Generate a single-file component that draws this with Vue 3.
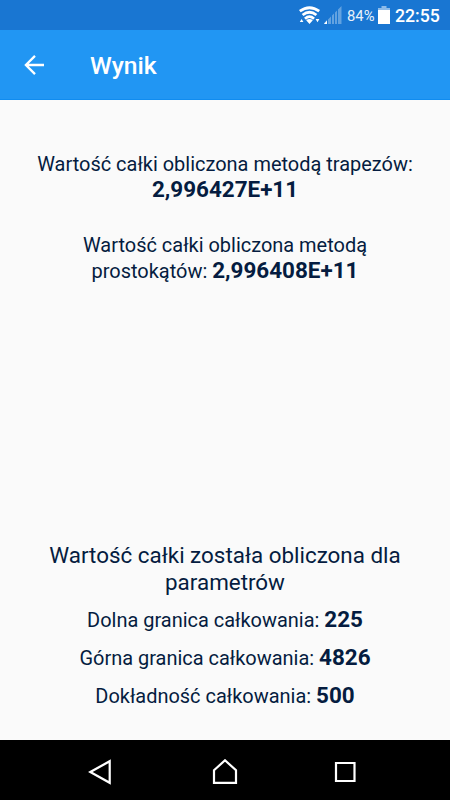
<script setup>
const results = [
  { label: 'Wartość całki obliczona metodą trapezów:', value: '2,996427E+11' },
  { label: 'Wartość całki obliczona metodą prostokątów:', value: '2,996408E+11' },
]
const params = [
  { label: 'Dolna granica całkowania:', value: '225' },
  { label: 'Górna granica całkowania:', value: '4826' },
  { label: 'Dokładność całkowania:', value: '500' },
]
</script>

<template>
  <div class="screen">
    <div class="status">
      <svg class="wifi" width="22" height="18" viewBox="0 0 22 18" fill="none" stroke="#fff" stroke-width="2.8">
        <path d="M.8 5.200Q10.500-1.800 20.200 5.200M3.600 9Q10.500 3.400 17.400 9M6 12.700Q10.500 8.600 15 12.700" />
        <path d="M10.500 18 7.200 14.200Q10.500 11.600 13.800 14.200ZM.8 16 2.600 13 4.400 16ZM16.600 13H20.400L18.500 16.200Z" fill="#fff" stroke="none" />
      </svg>
      <svg class="signal" width="18" height="18" viewBox="0 0 18 18">
        <path d="M0 18V17L3 14V18ZM4 18V13.500L7 10.500V18ZM8 18V9.500L10 7.500V18ZM11 18V6.500L13 4.500V18ZM14 18V3.500L17.500 0V18Z" fill="#fff" fill-opacity=".32" />
        <path d="M0 18 3 14.500V18Z" fill="#fff" />
      </svg>
      <span class="percent">84%</span>
      <svg class="battery" width="12" height="18" viewBox="0 0 12 18">
        <path d="M3.500 0H8.500V2H12V18H0V2H3.500Z" fill="#fff" fill-opacity=".5" />
        <path d="M0 4H12V18H0Z" fill="#fff" />
      </svg>
      <span class="clock">22:55</span>
    </div>
    <header class="bar">
      <svg width="20" height="20" viewBox="0 0 20 20" fill="none" stroke="#fff" stroke-width="2.300">
        <path d="M20 10H2M11 .9 1.900 10 11 19.100" />
      </svg>
      <h1>Wynik</h1>
    </header>
    <main class="content">
      <section class="results">
        <p v-for="r in results" :key="r.value">{{ r.label }} <b>{{ r.value }}</b></p>
      </section>
      <section class="params">
        <h2>Wartość całki została obliczona dla parametrów</h2>
        <p v-for="p in params" :key="p.value">{{ p.label }} <b>{{ p.value }}</b></p>
      </section>
    </main>
    <nav class="nav">
      <svg width="28" height="26" viewBox="0 0 28 26"><path d="M2.300 13 21.700 2.200V23.800Z" /></svg>
      <svg width="26" height="26" viewBox="0 0 26 26"><path d="M2 11.300 13 1.300 24 11.300V23.900H2Z" /></svg>
      <svg width="22" height="22" viewBox="0 0 22 22"><path d="M2 2H20.500V20H2Z" /></svg>
    </nav>
  </div>
</template>

<style>
body {
  margin: 0;
}
</style>

<style scoped>
.screen {
  width: 450px;
  height: 800px;
  display: flex;
  flex-direction: column;
  overflow: hidden;
  background: #fafafa;
  color: #051c40;
  font-family: Roboto, sans-serif;
}
.status {
  flex: none;
  height: 30px;
  box-sizing: border-box;
  padding: 0 10px 0 299px;
  display: flex;
  align-items: center;
  background: #1976d2;
  color: #fff;
}
.status svg,
.status span {
  flex: none;
}
.signal {
  margin-left: 3px;
}
.percent {
  margin-left: 5px;
  width: 27px;
  padding-top: 2px;
  font-size: 14.800px;
  line-height: 30px;
  white-space: nowrap;
  opacity: .9;
}
.battery {
  margin-left: 4px;
}
.clock {
  margin-left: 5px;
  padding-top: 2px;
  font-size: 17.700px;
  font-weight: 500;
  line-height: 30px;
}
.bar {
  flex: none;
  height: 70px;
  box-sizing: border-box;
  padding: 0 24px;
  display: flex;
  align-items: center;
  gap: 46px;
  background: #2196f3;
  border-bottom: 1px solid #108cf0;
  color: #fff;
}
h1 {
  margin: 2px 0 0;
  font-size: 24.700px;
  line-height: 30px;
  font-weight: 500;
}
.content {
  flex: 1;
  display: flex;
  flex-direction: column;
  justify-content: space-between;
  padding: 51px 35px 31px;
  text-align: center;
}
p {
  margin: 0;
  font-size: 19.970px;
  line-height: 26px;
}
b {
  font-size: 22.450px;
  line-height: 22px;
  font-weight: 700;
}
.results {
  display: flex;
  flex-direction: column;
  gap: 29px;
}
.params {
  display: flex;
  flex-direction: column;
  gap: 12px;
}
h2 {
  margin: 0;
  font-size: 22.400px;
  line-height: 26.500px;
  font-weight: 400;
}
.nav {
  flex: none;
  height: 60px;
  box-sizing: border-box;
  padding: 4px 94px 0 88px;
  display: flex;
  align-items: center;
  justify-content: space-between;
  background: #000;
}
.nav path {
  fill: none;
  stroke: #fff;
  stroke-width: 2.200;
}
</style>
